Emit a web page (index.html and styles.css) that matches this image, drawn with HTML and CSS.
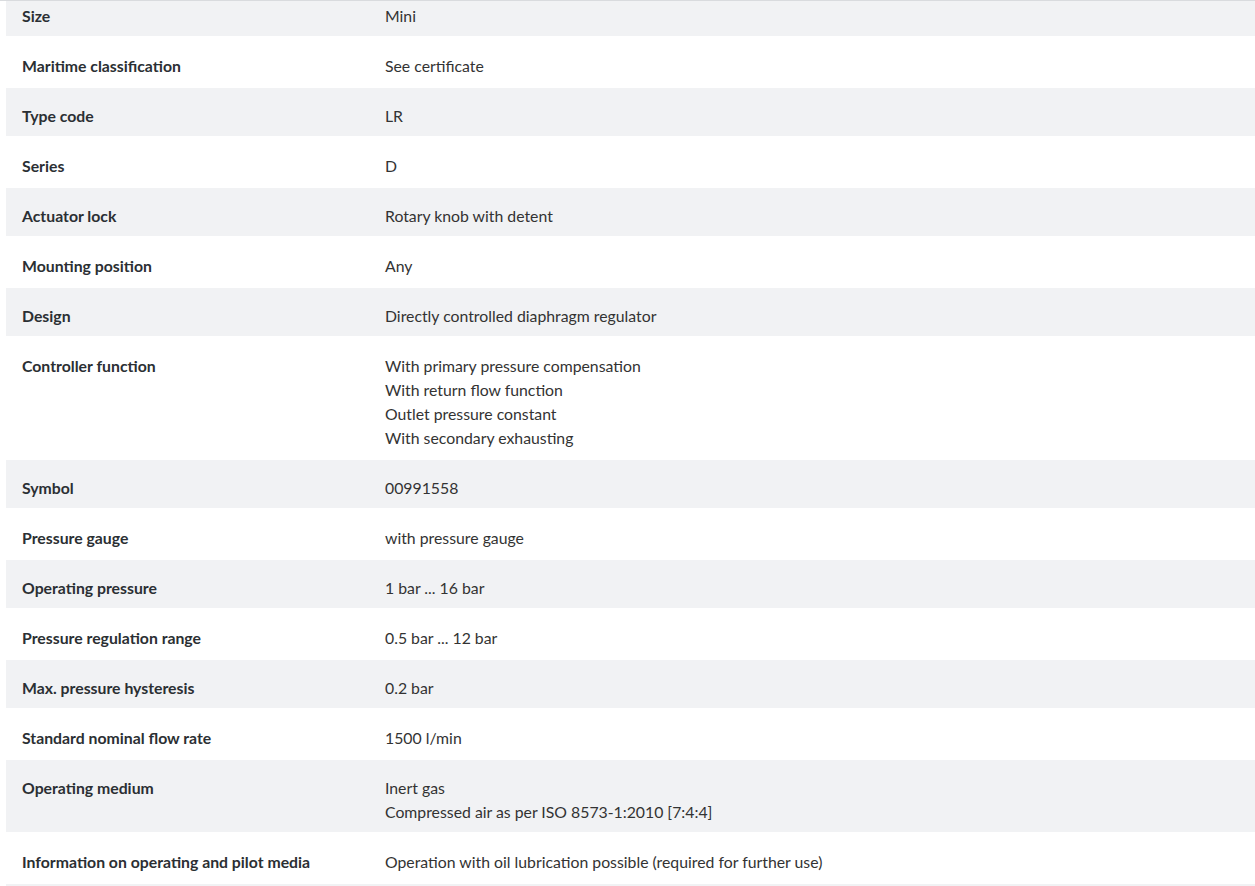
FILE: index.html
```html
<!DOCTYPE html>
<html lang="en">
<head>
<meta charset="utf-8">
<title>Technical data</title>
<link rel="stylesheet" href="styles.css">
</head>
<body>
<div class="page">
  <div class="sticky-line"></div>
  <div class="specs">
    <div class="row"><div class="label">Size</div><div class="value">Mini</div></div>
    <div class="row"><div class="label">Maritime classification</div><div class="value">See certificate</div></div>
    <div class="row"><div class="label">Type code</div><div class="value">LR</div></div>
    <div class="row"><div class="label">Series</div><div class="value">D</div></div>
    <div class="row"><div class="label">Actuator lock</div><div class="value">Rotary knob with detent</div></div>
    <div class="row"><div class="label">Mounting position</div><div class="value">Any</div></div>
    <div class="row"><div class="label">Design</div><div class="value">Directly controlled diaphragm regulator</div></div>
    <div class="row"><div class="label">Controller function</div><div class="value">With primary pressure compensation<br>With return flow function<br>Outlet pressure constant<br>With secondary exhausting</div></div>
    <div class="row"><div class="label">Symbol</div><div class="value">00991558</div></div>
    <div class="row"><div class="label">Pressure gauge</div><div class="value">with pressure gauge</div></div>
    <div class="row"><div class="label">Operating pressure</div><div class="value">1 bar ... 16 bar</div></div>
    <div class="row"><div class="label">Pressure regulation range</div><div class="value">0.5 bar ... 12 bar</div></div>
    <div class="row"><div class="label">Max. pressure hysteresis</div><div class="value">0.2 bar</div></div>
    <div class="row"><div class="label">Standard nominal flow rate</div><div class="value">1500 l/min</div></div>
    <div class="row"><div class="label">Operating medium</div><div class="value">Inert gas<br>Compressed air as per ISO 8573-1:2010 [7:4:4]</div></div>
    <div class="row"><div class="label">Information on operating and pilot media</div><div class="value">Operation with oil lubrication possible (required for further use)</div></div>
    <div class="row row-next"></div>
  </div>
</div>
</body>
</html>
```
FILE: styles.css
```css
html, body {
  margin: 0;
  padding: 0;
  background: #ffffff;
}
body {
  font-family: "Lato", "Open Sans", sans-serif;
  font-size: 15.8px;
  line-height: 24px;
  color: #333333;
}
.page {
  height: 886px;
  overflow: hidden;
}
.sticky-line {
  position: sticky;
  top: 0;
  z-index: 2;
  height: 1px;
  background: #d9dbde;
}
.specs {
  margin-top: -14px;
  margin-left: 6px;
  width: 1260px;
}
.row {
  display: grid;
  grid-template-columns: 363px 1fr;
  border-top: 1px solid #ffffff;
  border-bottom: 1px solid #ffffff;
}
.row:nth-child(odd) {
  background: #f1f2f4;
}
.row-next {
  height: 48px;
}
.label {
  padding: 16px 16px 8px;
  font-weight: 700;
  color: #2b2f33;
}
.value {
  padding: 16px 16px 8px;
  font-weight: 400;
  color: #333333;
}
```
